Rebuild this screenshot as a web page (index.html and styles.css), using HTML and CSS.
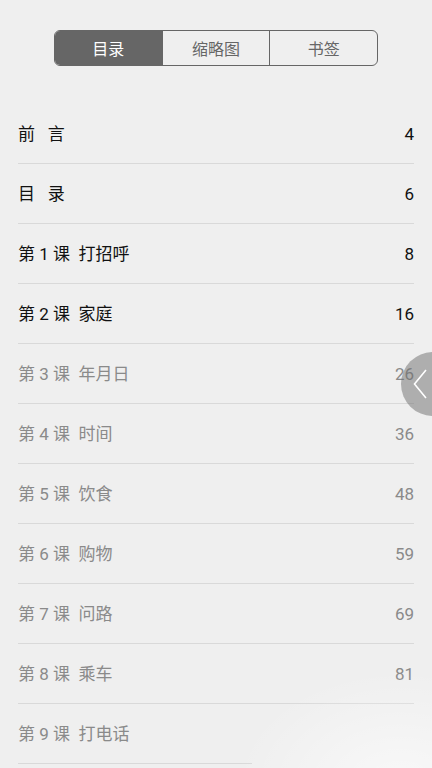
FILE: index.html
```html
<!DOCTYPE html>
<html lang="zh-CN">
<head>
<meta charset="utf-8">
<link rel="stylesheet" href="styles.css">
</head>
<body>
<div class="page">
  <div class="tabs-wrap">
    <div class="tabs">
      <div class="tab active">目录</div>
      <div class="tab">缩略图</div>
      <div class="tab">书签</div>
    </div>
  </div>
  <ul class="toc">
    <li class="row dark"><span>前&nbsp;&nbsp;&nbsp;言</span><span>4</span></li>
    <li class="row dark"><span>目&nbsp;&nbsp;&nbsp;录</span><span>6</span></li>
    <li class="row dark"><span>第 1 课&nbsp;&nbsp;打招呼</span><span>8</span></li>
    <li class="row dark"><span>第 2 课&nbsp;&nbsp;家庭</span><span>16</span></li>
    <li class="row"><span>第 3 课&nbsp;&nbsp;年月日</span><span>26</span></li>
    <li class="row"><span>第 4 课&nbsp;&nbsp;时间</span><span>36</span></li>
    <li class="row"><span>第 5 课&nbsp;&nbsp;饮食</span><span>48</span></li>
    <li class="row"><span>第 6 课&nbsp;&nbsp;购物</span><span>59</span></li>
    <li class="row"><span>第 7 课&nbsp;&nbsp;问路</span><span>69</span></li>
    <li class="row"><span>第 8 课&nbsp;&nbsp;乘车</span><span>81</span></li>
    <li class="row short"><span>第 9 课&nbsp;&nbsp;打电话</span><span></span></li>
  </ul>
  <div class="glare"></div>
  <div class="side-btn">
    <svg width="14" height="30" viewBox="0 0 14 30"><path d="M13 1 L1.5 15 L13 29" fill="none" stroke="#fff" stroke-width="1.6"/></svg>
  </div>
</div>
</body>
</html>
```

FILE: styles.css
```css
* { box-sizing: border-box; }
html, body { margin: 0; padding: 0; }
body {
  background: #efefef;
  font-family: Roboto, "Noto Sans CJK SC", sans-serif;
  width: 432px;
  height: 768px;
  overflow: hidden;
}
.page { position: relative; height: 768px; width: 432px; overflow: hidden; }
.tabs-wrap { padding-top: 30px; display: flex; justify-content: center; }
.tabs {
  display: flex;
  width: 324px;
  height: 36px;
  border: 1.5px solid #666;
  border-radius: 6px;
  overflow: hidden;
}
.tab {
  flex: 1;
  display: flex;
  align-items: center;
  justify-content: center;
  font-size: 16px;
  color: #666;
  border-left: 1.5px solid #666;
}
.tab:first-child { border-left: none; }
.tab.active { background: #666; color: #fff; }
.toc { list-style: none; margin: 38px 0 0; padding: 0 18px; position: relative; z-index: 1; }
.row {
  height: 60px;
  display: flex;
  align-items: baseline;
  justify-content: space-between;
  padding-top: 19px;
  border-bottom: 1px solid #d9d9d9;
  font-size: 17px;
  line-height: 22px;
  color: #8a8a8a;
}
.row.dark { color: #111; }
.row.short { border-bottom: none; position: relative; }
.row.short::after {
  content: "";
  position: absolute;
  left: 0; bottom: 0;
  width: 234px;
  height: 1px;
  background: #d9d9d9;
}
.glare {
  position: absolute;
  left: 220px; top: 660px;
  width: 300px; height: 180px;
  background: radial-gradient(ellipse at 60% 70%, rgba(255,255,255,0.6), rgba(255,255,255,0) 65%);
  z-index: 2;
  pointer-events: none;
}
.side-btn {
  position: absolute;
  left: 401px;
  top: 352px;
  width: 64px;
  height: 64px;
  border-radius: 50%;
  background: rgba(110,110,110,0.5);
  display: flex;
  align-items: center;
  padding-left: 12px;
  z-index: 3;
}
```
